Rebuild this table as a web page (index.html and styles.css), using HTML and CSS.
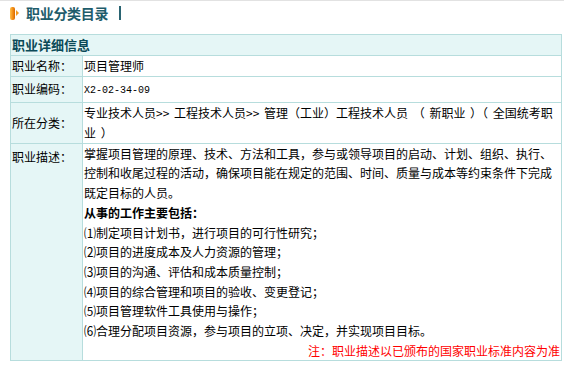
FILE: index.html
```html
<!DOCTYPE html>
<html lang="zh">
<head>
<meta charset="utf-8">
<title>职业分类目录</title>
<link rel="stylesheet" href="styles.css">
</head>
<body>
<div class="titlebar">
  <span class="title-icon"><span class="icon-bar"></span><span class="icon-arrow"></span></span>
  <span class="title-text">职业分类目录</span>
  <span class="title-sep"></span>
</div>
<table class="info">
  <tr class="r-head"><th colspan="2" class="caption">职业详细信息</th></tr>
  <tr class="r-name"><td class="label">职业名称：</td><td class="value">项目管理师</td></tr>
  <tr class="r-code"><td class="label">职业编码：</td><td class="value"><span class="code">X2-02-34-09</span></td></tr>
  <tr class="r-cat"><td class="label">所在分类：</td><td class="value spaced">专业技术人员&gt;&gt; 工程技术人员&gt;&gt; 管理（工业）工程技术人员 （ 新职业 ）（ 全国统考职<br>业 ）</td></tr>
  <tr class="r-desc"><td class="label top">职业描述：</td><td class="value desc">掌握项目管理的原理、技术、方法和工具，参与或领导项目的启动、计划、组织、执行、<br>控制和收尾过程的活动，确保项目能在规定的范围、时间、质量与成本等约束条件下完成<br>既定目标的人员。
    <div class="sub">从事的工作主要包括：</div>
    <div>⑴制定项目计划书，进行项目的可行性研究；</div>
    <div>⑵项目的进度成本及人力资源的管理；</div>
    <div>⑶项目的沟通、评估和成本质量控制；</div>
    <div>⑷项目的综合管理和项目的验收、变更登记；</div>
    <div>⑸项目管理软件工具使用与操作；</div>
    <div>⑹合理分配项目资源，参与项目的立项、决定，并实现项目目标。</div>
    <div class="note">注：职业描述以已颁布的国家职业标准内容为准</div>
  </td></tr>
</table>
</body>
</html>
```

FILE: styles.css
```css
* { box-sizing: border-box; }
body {
  margin: 0;
  border-top: 1px solid #e2e2e2;
  font-family: "Noto Sans CJK SC", "Noto Sans", sans-serif;
  font-size: 12px;
  color: #000;
  background: #fff;
}
.titlebar {
  display: flex;
  align-items: center;
  height: 24px;
  padding-left: 10px;
}
.title-icon {
  display: flex;
  align-items: center;
}
.icon-bar {
  width: 5px;
  height: 13px;
  border-radius: 2px;
  background: linear-gradient(to right, #ffc04a, #f28a12 60%, #d86a00);
}
.icon-arrow {
  width: 0;
  height: 0;
  margin-left: 1px;
  border-top: 3px solid transparent;
  border-bottom: 3px solid transparent;
  border-left: 3px solid #f29a20;
}
.title-text {
  margin-left: 7px;
  font-size: 14px;
  font-weight: bold;
  color: #1e5c6b;
  letter-spacing: -0.3px;
}
.title-sep {
  width: 2px;
  height: 14px;
  margin-left: 11px;
  background: #2a6472;
}
.info {
  margin: 9px 0 0 10px;
  width: 552px;
  border-collapse: collapse;
}
.info th, .info td {
  border: 1px solid #b7dddd;
  padding: 0 1px;
  line-height: 19.7px;
  vertical-align: middle;
  text-align: left;
}
.caption {
  background: #e5f6f6;
  font-size: 13px;
  font-weight: bold;
  color: #0b4a58;
}
.label {
  width: 72px;
  background: #e5f6f6;
  white-space: nowrap;
}
.label.top { vertical-align: top; padding-top: 3px; }
.value { padding-left: 2px; }
.spaced { word-spacing: 2px; }
.r-head { height: 20px; }
.r-name { height: 21px; }
.r-code { height: 26px; }
.r-cat { height: 41px; }
.code {
  font-family: "Liberation Mono", monospace;
  font-size: 10px;
}
.desc {
  vertical-align: top;
  padding-top: 3px;
  padding-right: 1px;
}
.sub { font-weight: bold; }
.note {
  text-align: right;
  color: #ff0000;
}
```
